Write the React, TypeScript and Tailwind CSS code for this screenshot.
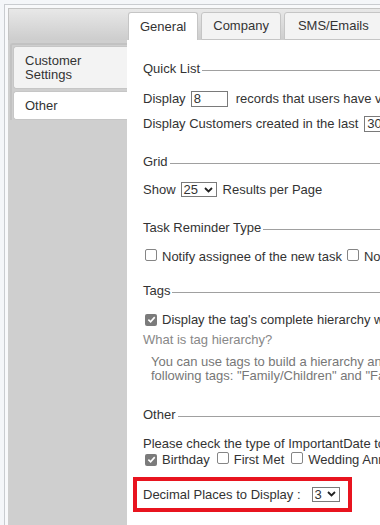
import { ReactNode } from "react";

function Legend({ children }: { children: ReactNode }) {
  return (
    <div className="flex items-center h-[16px]">
      <span className="whitespace-nowrap">{children}</span>
      <div className="flex-1 h-px bg-[#a0a0a0] ml-[2px] mt-[2px]" />
    </div>
  );
}

function Box({ checked = false }: { checked?: boolean }) {
  if (checked) {
    return (
      <span className="inline-flex items-center justify-center w-[12px] h-[12px] rounded-[2px] bg-[#7b7b7b] shrink-0">
        <svg width="9" height="9" viewBox="0 0 10 10" fill="none">
          <path d="M1.5 5.2 L4 7.6 L8.6 2.4" stroke="#fff" strokeWidth="1.8" />
        </svg>
      </span>
    );
  }
  return <span className="inline-block w-[12px] h-[12px] rounded-[2px] border border-[#858585] bg-white shrink-0" />;
}

function Select({ value, width }: { value: string; width: string }) {
  return (
    <span className={`inline-flex items-center justify-between h-[15px] border border-[#7a7a7a] bg-white pl-[2px] pr-[3px] ${width}`}>
      <span className="leading-none">{value}</span>
      <svg width="9" height="6" viewBox="0 0 9 6" fill="none">
        <path d="M1 1 L4.5 4.5 L8 1" stroke="#222" strokeWidth="1.8" />
      </svg>
    </span>
  );
}

export default function App() {
  return (
    <div
      className="w-[380px] h-[525px] overflow-hidden bg-[#f4f6f9] pl-[4px] pt-[4px] text-[13px] text-[#333]"
      style={{ fontFamily: '"Liberation Sans", Arial, sans-serif' }}
    >
      <div className="h-full border-l border-t border-[#c9ccd0] pl-[3px] pt-[3px] bg-[#f8f9fb]">
        <div className="w-[600px] h-full flex flex-col">
          {/* top tab strip */}
          <div className="h-[32px] shrink-0 flex items-end gap-[3px] pl-[119px] border-t border-l border-[#c4c4c4] bg-gradient-to-b from-[#e8e8e8] to-[#cdcdcd]">
            <div className="h-[28px] px-[11px] flex items-center bg-white border border-b-0 border-[#c5c5c5] rounded-t-[3px]">General</div>
            <div className="h-[28px] px-[11px] flex items-center bg-[#f3f3f3] border border-[#c5c5c5] rounded-t-[3px]">Company</div>
            <div className="h-[28px] px-[13px] flex items-center bg-[#f3f3f3] border border-[#c5c5c5] rounded-t-[3px]">SMS/Emails</div>
            <div className="h-[28px] px-[11px] flex items-center bg-[#f3f3f3] border border-[#c5c5c5] rounded-t-[3px]">Templates</div>
          </div>

          <div className="flex flex-1 min-w-0">
            {/* left vertical tabs */}
            <div className="w-[119px] shrink-0 bg-[#cfcfcf] pt-[3px] pl-[2px]">
              <div className="border-l-2 border-t-2 border-[#c2c2c2] rounded-tl-[3px] pt-[1px] pl-[1px]">
                <div className="h-[43px] pl-[11px] flex flex-col justify-center leading-[14px] bg-[#f3f3f3] border border-r-0 border-[#c6c6c6] rounded-l-[3px]">
                  <span>Customer</span>
                  <span>Settings</span>
                </div>
                <div className="h-[29px] mt-[2px] pl-[11px] flex items-center bg-white border border-r-0 border-[#c6c6c6] rounded-l-[3px]">
                  Other
                </div>
              </div>
            </div>

            {/* content */}
            <div className="flex-1 min-w-0 overflow-hidden bg-white pl-[16px] pt-[21px] whitespace-nowrap">
              <Legend>Quick List</Legend>
              <div className="mt-[12px] h-[20px] flex items-center">
                <span>Display</span>
                <span className="ml-[5px] w-[37px] h-[16px] border border-[#7a7a7a] pl-[2px] leading-[14px]">8</span>
                <span className="ml-[8px]">records that users have viewed recently</span>
              </div>
              <div className="mt-[5px] h-[20px] flex items-center">
                <span>Display Customers created in the last</span>
                <span className="ml-[6px] w-[37px] h-[16px] border border-[#7a7a7a] pl-[2px] leading-[14px]">30</span>
                <span className="ml-[6px]">days</span>
              </div>

              <div className="mt-[20px]">
                <Legend>Grid</Legend>
              </div>
              <div className="mt-[10px] h-[20px] flex items-center">
                <span>Show</span>
                <span className="ml-[5px]">
                  <Select value="25" width="w-[36px]" />
                </span>
                <span className="ml-[6px]">Results per Page</span>
              </div>

              <div className="mt-[20px]">
                <Legend>Task Reminder Type</Legend>
              </div>
              <div className="mt-[11px] h-[20px] flex items-center">
                <span className="ml-[2px]"><Box /></span>
                <span className="ml-[5px]">Notify assignee of the new task</span>
                <span className="ml-[5px]"><Box /></span>
                <span className="ml-[5px]">Notify creator of the task</span>
              </div>

              <div className="mt-[16px]">
                <Legend>Tags</Legend>
              </div>
              <div className="mt-[11px] h-[20px] flex items-center">
                <span className="ml-[2px]"><Box checked /></span>
                <span className="ml-[5px]">Display the tag's complete hierarchy when showing tags</span>
              </div>
              <div className="mt-[2px] h-[16px] leading-[16px] text-[#888]">What is tag hierarchy?</div>
              <div className="mt-[7px] ml-[8px] leading-[14px] text-[#777]">
                <div>You can use tags to build a hierarchy and organize your customers. For example, the</div>
                <div>following tags: "Family/Children" and "Family/Parents" create a hierarchy.</div>
              </div>

              <div className="mt-[24px]">
                <Legend>Other</Legend>
              </div>
              <div className="mt-[13px] h-[16px] leading-[16px]">
                Please check the type of ImportantDate to display on the calendar
              </div>
              <div className="h-[16px] flex items-center">
                <span className="ml-[2px]"><Box checked /></span>
                <span className="ml-[5px]">Birthday</span>
                <span className="ml-[7px]"><Box /></span>
                <span className="ml-[5px]">First Met</span>
                <span className="ml-[7px]"><Box /></span>
                <span className="ml-[5px]">Wedding Anniversary</span>
              </div>

              <div className="mt-[9px] -ml-[10px] w-[219px] h-[35px] border-4 border-[#e8141f] pl-[6px] flex items-center">
                <span>Decimal Places to Display :</span>
                <span className="ml-[11px]">
                  <Select value="3" width="w-[28px]" />
                </span>
              </div>
            </div>
          </div>
        </div>
      </div>
    </div>
  );
}
